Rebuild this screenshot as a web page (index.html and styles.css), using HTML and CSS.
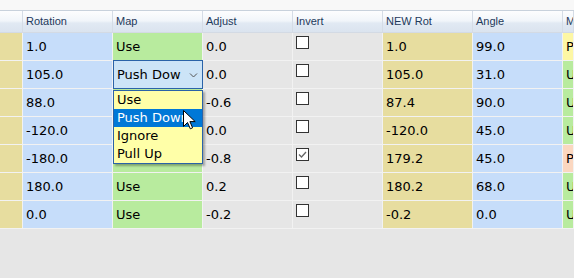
FILE: index.html
```html
<!DOCTYPE html>
<html lang="en">
<head>
    <meta charset="UTF-8">
    <meta name="viewport" content="width=device-width, initial-scale=1.0">
    <link rel="stylesheet" href="styles.css">
    <title>Rotation Map</title>
</head>
<body>
    <div class="topbar"></div>
    <div class="sheet">
        <div class="row head">
            <div class="cell"></div>
            <div class="cell">Rotation</div>
            <div class="cell">Map</div>
            <div class="cell">Adjust</div>
            <div class="cell">Invert</div>
            <div class="cell">NEW Rot</div>
            <div class="cell">Angle</div>
            <div class="cell">Map</div>
        </div>

        <div class="row">
            <div class="cell tan"></div>
            <div class="cell blue">1.0</div>
            <div class="cell green">Use</div>
            <div class="cell gray">0.0</div>
            <div class="cell gray"><span class="check"></span></div>
            <div class="cell tan">1.0</div>
            <div class="cell blue">99.0</div>
            <div class="cell yellow">Push Down</div>
        </div>

        <div class="row">
            <div class="cell tan"></div>
            <div class="cell blue">105.0</div>
            <div class="cell green editing">
                <div class="combo">
                    <span class="combo-text">Push Down</span>
                    <svg class="combo-arrow" width="9" height="6" viewBox="0 0 9 6"><path d="M1 1.5 L4.5 5 L8 1.5" fill="none" stroke="#555" stroke-width="1"/></svg>
                </div>
                <ul class="dropdown">
                    <li>Use</li>
                    <li class="selected">Push Down</li>
                    <li>Ignore</li>
                    <li>Pull Up</li>
                </ul>
                <svg class="pointer" width="13" height="20" viewBox="0 0 13 20"><path d="M0.5 0.5 L0.5 16.5 L4.5 12.5 L7.3 18.8 L9.6 17.8 L6.9 11.6 L12.2 11.6 Z" fill="#fff" stroke="#000" stroke-width="1" stroke-linejoin="miter"/></svg>
            </div>
            <div class="cell gray">0.0</div>
            <div class="cell gray"><span class="check"></span></div>
            <div class="cell tan">105.0</div>
            <div class="cell blue">31.0</div>
            <div class="cell green">Use</div>
        </div>

        <!-- map cells of the next three rows sit under the open list -->
        <div class="row">
            <div class="cell tan"></div>
            <div class="cell blue">88.0</div>
            <div class="cell green"></div>
            <div class="cell gray">-0.6</div>
            <div class="cell gray"><span class="check"></span></div>
            <div class="cell tan">87.4</div>
            <div class="cell blue">90.0</div>
            <div class="cell green">Use</div>
        </div>

        <div class="row">
            <div class="cell tan"></div>
            <div class="cell blue">-120.0</div>
            <div class="cell green"></div>
            <div class="cell gray">0.0</div>
            <div class="cell gray"><span class="check"></span></div>
            <div class="cell tan">-120.0</div>
            <div class="cell blue">45.0</div>
            <div class="cell green">Use</div>
        </div>

        <div class="row">
            <div class="cell tan"></div>
            <div class="cell blue">-180.0</div>
            <div class="cell green"></div>
            <div class="cell gray">-0.8</div>
            <div class="cell gray">
                <span class="check"><svg width="11" height="11" viewBox="0 0 11 11"><path d="M2 5.5 L4.5 8 L9 3" fill="none" stroke="#666" stroke-width="1.3"/></svg></span>
            </div>
            <div class="cell tan">179.2</div>
            <div class="cell blue">45.0</div>
            <div class="cell peach">Pull Up</div>
        </div>

        <div class="row">
            <div class="cell tan"></div>
            <div class="cell blue">180.0</div>
            <div class="cell green">Use</div>
            <div class="cell gray">0.2</div>
            <div class="cell gray"><span class="check"></span></div>
            <div class="cell tan">180.2</div>
            <div class="cell blue">68.0</div>
            <div class="cell green">Use</div>
        </div>

        <div class="row">
            <div class="cell tan"></div>
            <div class="cell blue">0.0</div>
            <div class="cell green">Use</div>
            <div class="cell gray">-0.2</div>
            <div class="cell gray"><span class="check"></span></div>
            <div class="cell tan">-0.2</div>
            <div class="cell blue">0.0</div>
            <div class="cell green">Use</div>
        </div>
    </div>
</body>
</html>
```

FILE: styles.css
```css
body {
    margin: 0;
    padding: 0;
    background-color: #e6e6e6;
    font-family: "DejaVu Sans", sans-serif;
    font-size: 13px;
    color: #000;
}

.topbar {
    height: 10px;
    background-color: #f8f8f8;
}

.row {
    display: grid;
    grid-template-columns: 23px repeat(6, 90px) 1fr;
}

.cell {
    box-sizing: border-box;
    height: 28px;
    line-height: 27px;
    padding-left: 3px;
    border-right: 1px solid #f2f2f2;
    border-bottom: 1px solid #f2f2f2;
    white-space: nowrap;
    overflow: hidden;
}

.head {
    border-top: 1px solid #c8d1dc;
    background: linear-gradient(#fdfdfe, #f1f5fa 45%, #e1e9f3 55%, #dae3ee);
}

.head .cell {
    height: 22px;
    line-height: 21px;
    font-family: "Liberation Sans", Arial, sans-serif;
    font-size: 11px;
    color: #1e395b;
    border-right: 1px solid #d5dce6;
    border-bottom: 1px solid #d3dae4;
}

.tan { background-color: #e7dd9f; }
.blue { background-color: #c6ddfa; }
.green { background-color: #b8eb9e; }
.gray { background-color: #e6e6e6; }
.yellow { background-color: #fdf7a4; }
.peach { background-color: #fbd7c0; }

.check {
    display: block;
    box-sizing: border-box;
    width: 13px;
    height: 13px;
    margin-top: 3px;
    border: 1px solid #333;
    background-color: #fff;
}

.check svg {
    display: block;
}

.editing {
    position: relative;
    overflow: visible;
}

.combo {
    position: absolute;
    top: -1px;
    left: 0;
    right: -1px;
    bottom: -1px;
    box-sizing: border-box;
    border: 1px solid #2a63a8;
    background-color: #cce4f7;
    display: flex;
    align-items: center;
    padding-left: 3px;
}

.combo-text {
    width: 64px;
    overflow: hidden;
    white-space: nowrap;
    line-height: 25px;
}

.combo-arrow {
    margin-left: 8px;
}

.dropdown {
    position: absolute;
    top: 29px;
    left: 0;
    z-index: 2;
    box-sizing: border-box;
    width: 90px;
    margin: 0;
    padding: 0;
    list-style: none;
    border: 1px solid #2a63a8;
    background-color: #ffffa8;
    box-shadow: 2px 2px 2px rgba(0, 0, 0, 0.3);
}

.dropdown li {
    height: 18px;
    line-height: 18px;
    padding-left: 3px;
    white-space: nowrap;
}

.dropdown .selected {
    background-color: #0078d7;
    color: #fff;
}

.pointer {
    position: absolute;
    top: 49px;
    left: 70px;
    z-index: 3;
}
```
